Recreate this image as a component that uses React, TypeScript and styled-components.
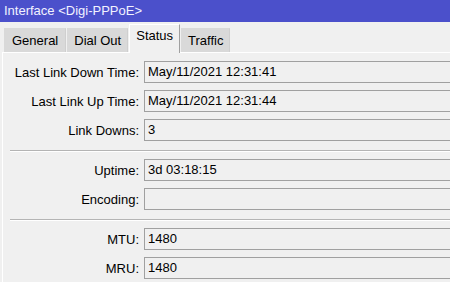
import React from "react";
import styled, { createGlobalStyle } from "styled-components";

const GlobalStyle = createGlobalStyle`
  html, body {
    margin: 0;
    padding: 0;
    background: #f0f0f0;
    font-family: "Liberation Sans", Arial, sans-serif;
    font-size: 13px;
    color: #000;
  }
`;

const Window = styled.div`
  width: 450px;
  height: 282px;
  overflow: hidden;
  background: #f0f0f0;
`;

const TitleBar = styled.div`
  height: 22px;
  line-height: 21px;
  padding-left: 4px;
  background: #4b50cb;
  color: #f2f2ff;
  white-space: nowrap;
`;

const TabBar = styled.div`
  display: flex;
  align-items: flex-end;
  height: 30px;
  padding-left: 4px;
  gap: 1px;
`;

const Tab = styled.div<{ $active?: boolean; $pad: number }>`
  box-sizing: border-box;
  height: ${(p) => (p.$active ? "29px" : "24px")};
  margin-bottom: ${(p) => (p.$active ? "-1px" : "0")};
  padding: ${(p) => (p.$active ? "3px" : "4px")} ${(p) => p.$pad}px 0;
  background: ${(p) => (p.$active ? "#f0f0f0" : "#d9d9d9")};
  border-top: 1px solid ${(p) => (p.$active ? "#ffffff" : "#d9d9d9")};
  border-left: 1px solid ${(p) => (p.$active ? "#ffffff" : "#d9d9d9")};
  border-right: 1px solid ${(p) => (p.$active ? "#a0a0a0" : "#cfcfcf")};
  line-height: 16px;
  white-space: nowrap;
  position: relative;
  z-index: ${(p) => (p.$active ? 1 : 0)};
`;

const Panel = styled.div`
  margin-left: 2px;
  border-top: 1px solid #ffffff;
  border-left: 1px solid #ffffff;
  padding-top: 8px;
  height: 240px;
`;

const Section = styled.div`
  display: flex;
  flex-direction: column;
  gap: 7px;
`;

const Row = styled.div`
  display: flex;
  align-items: center;
  height: 22px;
`;

const Label = styled.div`
  flex: 0 0 136px;
  text-align: right;
  margin-right: 5px;
  white-space: nowrap;
`;

const Value = styled.div`
  box-sizing: border-box;
  height: 22px;
  flex: 0 0 320px;
  border: 1px solid #a0a0a0;
  padding-left: 3px;
  line-height: 19px;
  white-space: nowrap;
`;

const Separator = styled.div`
  margin: 9px 0 7px 7px;
  height: 1px;
  background: #b4b4b4;
  border-bottom: 1px solid #ffffff;
`;

type Field = { label: string; value: string };

const groups: Field[][] = [
  [
    { label: "Last Link Down Time:", value: "May/11/2021 12:31:41" },
    { label: "Last Link Up Time:", value: "May/11/2021 12:31:44" },
    { label: "Link Downs:", value: "3" },
  ],
  [
    { label: "Uptime:", value: "3d 03:18:15" },
    { label: "Encoding:", value: "" },
  ],
  [
    { label: "MTU:", value: "1480" },
    { label: "MRU:", value: "1480" },
  ],
];

const tabs = [
  { name: "General", pad: 7 },
  { name: "Dial Out", pad: 6 },
  { name: "Status", pad: 6 },
  { name: "Traffic", pad: 6 },
];

const App: React.FC = () => {
  return (
    <Window>
      <GlobalStyle />
      <TitleBar>Interface &lt;Digi-PPPoE&gt;</TitleBar>
      <TabBar>
        {tabs.map((t) => (
          <Tab key={t.name} $active={t.name === "Status"} $pad={t.pad}>
            {t.name}
          </Tab>
        ))}
      </TabBar>
      <Panel>
        {groups.map((g, i) => (
          <React.Fragment key={i}>
            {i > 0 && <Separator />}
            <Section>
              {g.map((f) => (
                <Row key={f.label}>
                  <Label>{f.label}</Label>
                  <Value>{f.value}</Value>
                </Row>
              ))}
            </Section>
          </React.Fragment>
        ))}
      </Panel>
    </Window>
  );
};

export default App;
